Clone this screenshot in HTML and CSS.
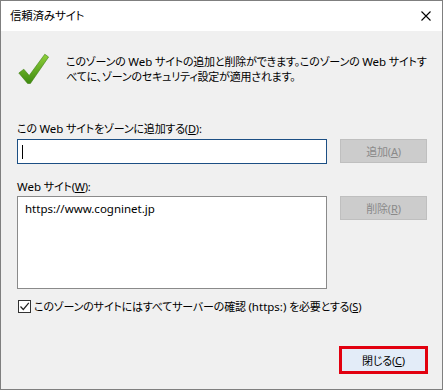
FILE: index.html
```html
<!DOCTYPE html>
<html lang="ja">
<head>
<meta charset="utf-8">
<link rel="stylesheet" href="styles.css">
</head>
<body>
<div class="window">
  <div class="titlebar">
    <span class="title">信頼済みサイト</span>
    <svg class="close-x" width="10" height="10" viewBox="0 0 10 10"><path d="M0.5 0.5 L9.5 9.5 M9.5 0.5 L0.5 9.5" stroke="#000" stroke-width="1.1" fill="none"/></svg>
  </div>
  <div class="content">
    <div class="intro">
      <svg class="check-icon" width="31" height="31" viewBox="0 0 31 31">
        <defs>
          <linearGradient id="g" x1="0" y1="0" x2="0" y2="1">
            <stop offset="0" stop-color="#8fd13a"/>
            <stop offset="1" stop-color="#3f8a10"/>
          </linearGradient>
        </defs>
        <path d="M0.8 20 L5.8 16.2 L11.2 22.5 L26.8 1.2 L30.6 4 L12.4 30.5 L9.6 30.5 Z" fill="url(#g)" stroke="#3c7d10" stroke-width="0.6" stroke-linejoin="round"/>
      </svg>
      <p class="intro-text">このゾーンの <span class="en">Web</span> サイトの追加と削除ができます。このゾーンの <span class="en">Web</span> サイトす<br>べてに、ゾーンのセキュリティ設定が適用されます。</p>
    </div>

    <div class="label label-add">この <span class="en">Web</span> サイトをゾーンに追加する(<u>D</u>):</div>
    <div class="row">
      <div class="textbox"><span class="caret"></span></div>
      <div class="btn disabled">追加(<u>A</u>)</div>
    </div>

    <div class="label label-list"><span class="en">Web</span> サイト(<u>W</u>):</div>
    <div class="row row-top">
      <div class="listbox"><div class="list-item en">https://www.cogninet.jp</div></div>
      <div class="btn disabled">削除(<u>R</u>)</div>
    </div>

    <div class="check-row">
      <span class="checkbox">
        <svg width="11" height="11" viewBox="0 0 11 11"><path d="M1.5 5.5 L4.3 8.5 L9.8 1.8" stroke="#222" stroke-width="1.2" fill="none"/></svg>
      </span>
      <span class="check-label">このゾーンのサイトにはすべてサーバーの確認 <span class="en">(https:)</span> を必要とする(<u>S</u>)</span>
    </div>

    <div class="footer">
      <div class="close-btn">閉じる(<u>C</u>)</div>
    </div>
  </div>
</div>
</body>
</html>
```

FILE: styles.css
```css
html, body {
  margin: 0;
  padding: 0;
}
body {
  font-family: "Noto Sans", "Noto Sans CJK JP", sans-serif;
  font-size: 11px;
  letter-spacing: -0.2px;
  color: #000;
  font-feature-settings: "palt";
}
.en {
  font-size: 11.5px;
  letter-spacing: 0;
}
.window {
  width: 443px;
  height: 390px;
  box-sizing: border-box;
  border: 1px solid #7f7f7f;
  background: #f0f0f0;
  display: flex;
  flex-direction: column;
}
.titlebar {
  height: 30px;
  background: #fff;
  display: flex;
  align-items: center;
  justify-content: space-between;
  padding: 0 11px 0 9px;
  flex: none;
}
.title {
  font-size: 11.5px;
  line-height: 15px;
  padding-bottom: 1px;
}
.close-x {
  display: block;
  margin-top: -1px;
}
.content {
  flex: 1;
  display: flex;
  flex-direction: column;
  padding: 22px 14px 15px 16px;
}
.intro {
  display: flex;
  align-items: flex-start;
}
.check-icon {
  display: block;
  margin-left: 1px;
  flex: none;
}
.intro-text {
  margin: 1px 0 0 17px;
  line-height: 15px;
  white-space: nowrap;
}
.label {
  line-height: 15px;
}
.label-add {
  margin-top: 37px;
}
.label-list {
  margin-top: 15px;
}
.row {
  display: flex;
  align-items: flex-start;
  margin-top: 3px;
  gap: 13px;
}
.row-top {
  margin-top: 2px;
}
.textbox {
  width: 310px;
  height: 25px;
  box-sizing: border-box;
  border: 1px solid #1c4f84;
  background: #fff;
  display: flex;
  align-items: center;
  padding-left: 4px;
}
.caret {
  display: block;
  width: 1px;
  height: 14px;
  background: #000;
}
.btn {
  width: 87px;
  height: 24px;
  box-sizing: border-box;
  display: flex;
  align-items: center;
  justify-content: center;
  line-height: 15px;
}
.btn.disabled {
  background: #cccccc;
  border: 1px solid #bfbfbf;
  color: #8a8a8a;
}
.listbox {
  width: 310px;
  height: 93px;
  box-sizing: border-box;
  border: 1px solid #8a8a8a;
  background: #fff;
  padding: 4px 0 0 7px;
}
.list-item {
  line-height: 15px;
}
.check-row {
  display: flex;
  align-items: center;
  margin-top: 10px;
  margin-left: 1px;
}
.checkbox {
  width: 13px;
  height: 13px;
  box-sizing: border-box;
  border: 1px solid #333;
  background: #fff;
  display: flex;
  align-items: center;
  justify-content: center;
  flex: none;
}
.checkbox svg {
  display: block;
}
.check-label {
  margin-left: 3px;
  line-height: 15px;
}
.footer {
  margin-top: auto;
  display: flex;
  justify-content: flex-end;
}
.close-btn {
  width: 89px;
  height: 28px;
  box-sizing: border-box;
  border: 3px solid #e2000f;
  background: #e3ecf8;
  display: flex;
  align-items: center;
  justify-content: center;
  line-height: 15px;
}
```
